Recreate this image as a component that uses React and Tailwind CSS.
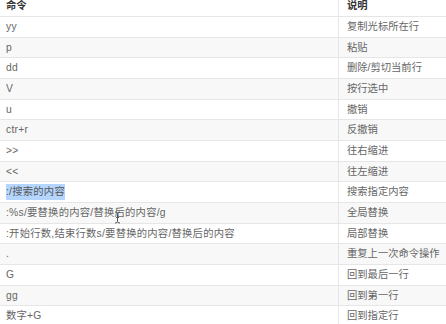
import React from "react";

const rows = [
  ["yy", "复制光标所在行"],
  ["p", "粘贴"],
  ["dd", "删除/剪切当前行"],
  ["V", "按行选中"],
  ["u", "撤销"],
  ["ctr+r", "反撤销"],
  [">>", "往右缩进"],
  ["<<", "往左缩进"],
  [":/搜索的内容", "搜索指定内容", true],
  [":%s/要替换的内容/替换后的内容/g", "全局替换"],
  [":开始行数,结束行数s/要替换的内容/替换后的内容", "局部替换"],
  [".", "重复上一次命令操作"],
  ["G", "回到最后一行"],
  ["gg", "回到第一行"],
  ["数字+G", "回到指定行"],
];

export default function App() {
  return (
    <div
      className="relative w-[446px] h-[324px] overflow-hidden bg-white text-[10.3px] text-[#666]"
      style={{ fontFamily: '"Liberation Sans", "Noto Sans CJK SC", sans-serif' }}
    >
      <div className="flex h-[17px] border-b border-[#e6e6e6] font-bold text-[#333]">
        <div className="w-[339px] border-r border-[#e6e6e6] pl-[6px] leading-[12px]">命令</div>
        <div className="flex-1 pl-[8px] leading-[12px]">说明</div>
      </div>
      {rows.map(([cmd, desc, hl], i) => (
        <div
          key={i}
          className={
            "flex h-[20.67px] border-b border-[#e6e6e6] " +
            (i % 2 === 1 ? "bg-[#f8f8f8]" : "bg-white")
          }
        >
          <div className="w-[339px] border-r border-[#e6e6e6] pl-[6px] flex items-center whitespace-nowrap tracking-[0.25px]">
            {hl ? <span className="bg-[#b4d5fe] text-[#555]">{cmd}</span> : cmd}
          </div>
          <div className="flex-1 pl-[8px] flex items-center whitespace-nowrap">{desc}</div>
        </div>
      ))}
      <svg
        className="absolute left-[114px] top-[211px]"
        width="7"
        height="13"
        viewBox="0 0 7 13"
      >
        <path
          d="M1 1 Q3.5 1 3.5 2.5 Q3.5 1 6 1 M3.5 2.5 V10.5 M1 12 Q3.5 12 3.5 10.5 Q3.5 12 6 12 M2 6.5 H5"
          stroke="#555"
          strokeWidth="1"
          fill="none"
        />
      </svg>
    </div>
  );
}
